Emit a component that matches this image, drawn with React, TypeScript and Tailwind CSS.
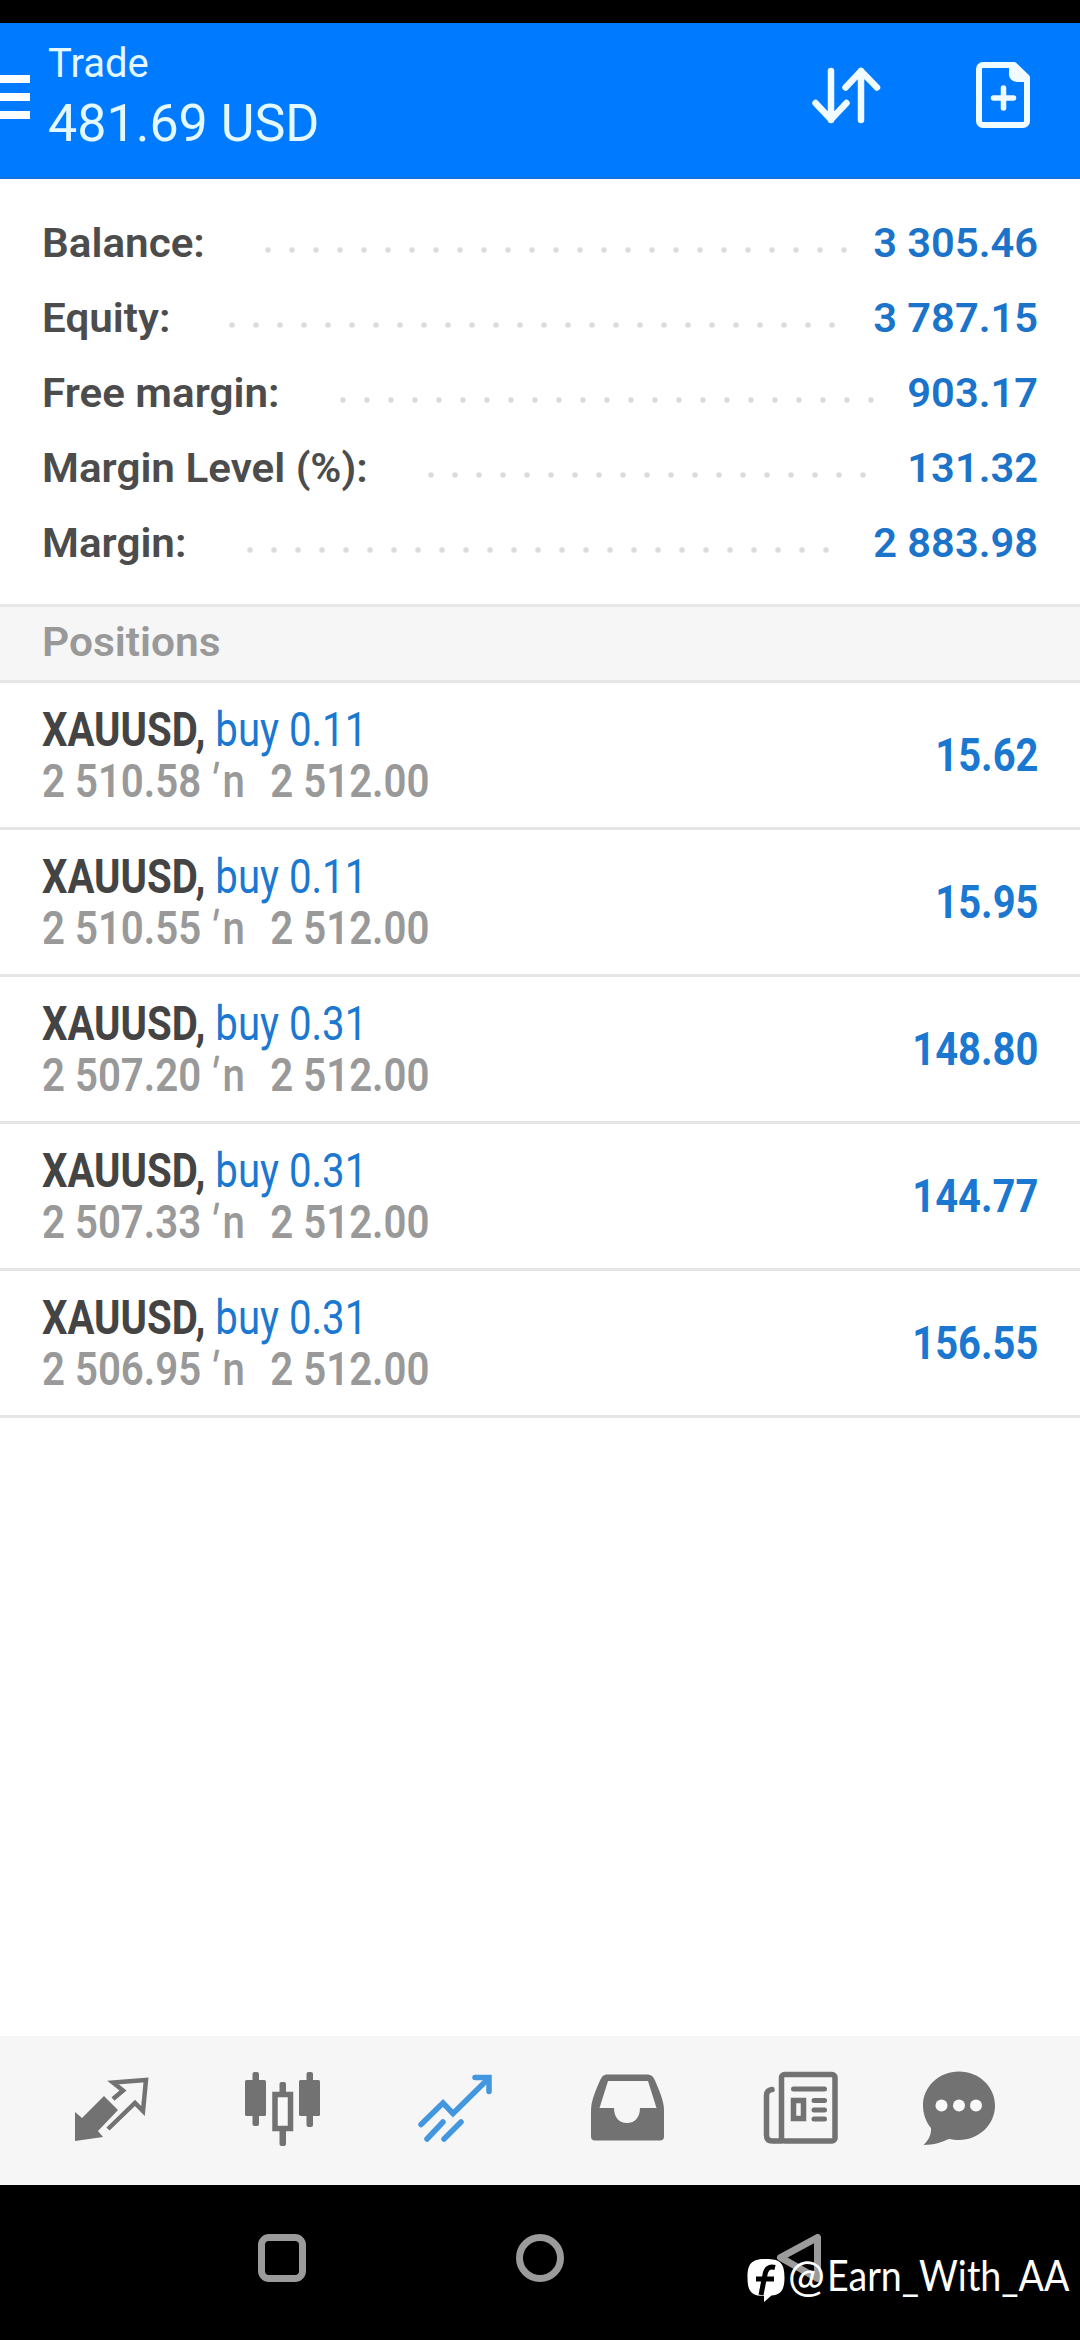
import React from 'react';

const summary = [
  { label: 'Balance:', value: '3 305.46', lead: 'w-[600px] mr-[17px]' },
  { label: 'Equity:', value: '3 787.15', lead: 'w-[624px] mr-[29px]' },
  { label: 'Free margin:', value: '903.17', lead: 'w-[552px] -mr-[10px]' },
  { label: 'Margin Level (%):', value: '131.32', lead: 'w-[456px] -mr-[2px]' },
  { label: 'Margin:', value: '2 883.98', lead: 'w-[600px] mr-[35px]' },
];

const positions = [
  { volume: '0.11', open: '2 510.58', profit: '15.62' },
  { volume: '0.11', open: '2 510.55', profit: '15.95' },
  { volume: '0.31', open: '2 507.20', profit: '148.80' },
  { volume: '0.31', open: '2 507.33', profit: '144.77' },
  { volume: '0.31', open: '2 506.95', profit: '156.55' },
];

function Header() {
  return (
    <header className="flex h-[156px] border-b-2 border-[#1273dc] bg-[#007bff] text-[#e4f8ff]">
      <div className="mt-[52px] flex h-[44px] w-[30px] flex-col justify-between">
        <span className="h-2 bg-white" />
        <span className="h-2 bg-white" />
        <span className="h-2 bg-white" />
      </div>
      <div className="ml-[18px] flex-1 pt-[13px]">
        <p className="text-[40px] leading-[56px]">Trade</p>
        <p className="text-[52px] leading-[64px]">481.69 USD</p>
      </div>
      <svg className="mt-[39px] mr-[93px] h-[64px] w-[70px]" viewBox="0 0 70 64" fill="none" stroke="#f0fcff" strokeWidth="6.5" strokeLinecap="round" strokeLinejoin="round">
        <path d="M19 9v49M3.5 41 19 57.5 34.5 41" />
        <path d="M49 58V9M33.5 25.5 49 9 65 25.5" />
      </svg>
      <svg className="mt-[36px] mr-[47px] h-[72px] w-[58px]" viewBox="0 0 58 72" fill="none" stroke="#f0fcff" strokeWidth="6" strokeLinejoin="round" strokeLinecap="round">
        <path d="M8 6h31l13 12.500V62a4 4 0 0 1-4 4H8a4 4 0 0 1-4-4V10a4 4 0 0 1 4-4Z" />
        <path d="M36 7v7a6 6 0 0 0 6 7h9Z" fill="#f0fcff" strokeWidth="4" />
        <path d="M28.5 29v20M18.5 39h20" strokeWidth="5.5" />
      </svg>
    </header>
  );
}

function SummaryRow({ label, value, lead }: { label: string; value: string; lead: string }) {
  return (
    <div className="flex h-[75px] items-center text-[40px] leading-[75px] font-semibold whitespace-pre">
      <span className="origin-left scale-x-[1.055] text-[#4c4c4c]">{label}</span>
      <span
        className={`mt-[13px] ml-auto h-1.5 shrink-0 bg-[radial-gradient(circle,#dadada_2px,transparent_3.5px)] bg-[length:24px_6px] ${lead}`}
      />
      <span className="w-[165px] shrink-0 origin-right scale-x-[1.04] text-right text-[#1b74c9]">{value}</span>
    </div>
  );
}

function PositionRow({ volume, open, profit }: { volume: string; open: string; profit: string }) {
  return (
    <div className="flex h-[147px] items-center justify-between border-b-[3px] border-[#e6e6e6] pr-[42px] pl-[42px] whitespace-pre">
      <div>
        <p className="origin-left scale-x-[0.836] text-[48px] leading-[51px]">
          <span className="font-bold text-[#444]">XAUUSD,</span>
          <span className="text-[#1b78d0]"> buy {volume}</span>
        </p>
        <p className="flex h-[51px] origin-left scale-x-[0.855] items-baseline text-[47px] leading-[51px] font-semibold text-[#999]">
          <span className="w-[197px]">{open}</span>
          <span className="w-[14px] -skew-x-12 font-medium">′</span>
          <span className="w-[56px] font-medium">n</span>
          <span>2 512.00</span>
        </p>
      </div>
      <span className="origin-right scale-x-[0.85] text-[47px] font-bold text-[#1b78d0]">{profit}</span>
    </div>
  );
}

function TabBar() {
  return (
    <nav className="flex h-[149px] bg-[#f6f6f6] pl-[25px] text-[#727272]">
      <svg className="h-[148px] w-[172px]" viewBox="0 0 172 148">
        <path d="M88 63l10-8.5-10-8 33-2.5-3 31-8-8-27 26" fill="none" stroke="currentColor" strokeWidth="4.5" />
        <path d="M50 76l7 6 22-22 14 14-20 21 5 6-28 4Z" fill="currentColor" />
      </svg>
      <svg className="h-[148px] w-[172px]" viewBox="0 0 172 148" fill="currentColor">
        <rect x="48" y="44" width="21" height="36" rx="1.5" />
        <rect x="55.5" y="36" width="6.5" height="54" rx="2" />
        <rect x="102" y="44" width="21" height="36" rx="1.5" />
        <rect x="109.5" y="36" width="6.5" height="55" rx="2" />
        <rect x="82.5" y="46" width="6.5" height="64" rx="2" />
        <rect x="78" y="58.5" width="15.5" height="34" fill="#f9f9f9" stroke="currentColor" strokeWidth="5.5" />
      </svg>
      <svg className="h-[148px] w-[172px]" viewBox="0 0 172 148" fill="none" stroke="#4397df" strokeWidth="5.5" strokeLinecap="round">
        <path d="M52 88.5 74 67l10 10.5L119 43" />
        <path d="M106 41.5h14v14" />
        <path d="M58 103 74 86M75 103 92 86" />
      </svg>
      <svg className="h-[148px] w-[172px]" viewBox="0 0 172 148" fill="currentColor">
        <path
          fillRule="evenodd"
          d="M67 38.5h38c5 0 7 1.5 9 6 6 14 9 22 9 30v26a4 4 0 0 1-4 4H54a4 4 0 0 1-4-4V75c0-9 3-17 9-30.5 2-4.5 4-6 8-6ZM67 45 58.5 72H73c0 9 5 15 13 15s13-6 13-15h16.5L107 45Z"
        />
      </svg>
      <svg className="h-[148px] w-[172px]" viewBox="0 0 172 148" fill="none" stroke="currentColor" strokeWidth="5.5" strokeLinecap="round">
        <rect x="68.5" y="38.5" width="53.5" height="66.5" rx="3" />
        <path d="M59 53.5c-4 .5-5.5 2.5-5.5 6V99c0 4 2 6 6 6h9" />
        <path d="M80.5 53h31M101 64.5h10.5M101 74h10.5M101 83h10.5" strokeWidth="5" />
        <rect x="80.5" y="64.5" width="10" height="18" strokeWidth="5.5" />
      </svg>
      <svg className="h-[148px] w-[172px]" viewBox="0 0 172 148" fill="currentColor">
        <path d="M74 35.5c20 0 36 15 36 34s-16 34.5-36 34.5c-4 0-7-.5-10-1-7 3-15 6-25.5 6 4-4 8-9 7.5-17C41 86 38 78 38 69.5c0-19 16-34 36-34Z" />
        <circle cx="56.5" cy="69.5" r="6" fill="#f9f9f9" />
        <circle cx="74" cy="69.5" r="6" fill="#f9f9f9" />
        <circle cx="91" cy="69.5" r="6" fill="#f9f9f9" />
      </svg>
    </nav>
  );
}

function SystemBar() {
  return (
    <div className="relative flex flex-1 bg-black pt-[49px]">
      <span className="ml-[258px] size-12 rounded-[11px] border-[7px] border-[#9b9b9b]" />
      <span className="ml-[210px] size-12 rounded-full border-[7px] border-[#9b9b9b]" />
      <svg className="ml-[210px] size-12" viewBox="0 0 48 48" fill="none" stroke="#9b9b9b" strokeWidth="7" strokeLinejoin="round">
        <path d="M43.5 3.5v41L6.5 23.5Z" />
      </svg>
      <div className="absolute top-[60px] left-[747px] flex text-white">
        <svg className="mt-[14px] h-[44px] w-[38px]" viewBox="0 0 38 44">
          <path d="M19 0c14 0 18.5 4 18.5 18.5 0 13-4 17.5-13 18L17 43v-6C4 37 .5 32 .5 18.5.5 4 5 0 19 0Z" fill="#fff" />
          <path d="M28 8.5c-6-1.5-9 1-10 7L14 36M9 20h18" fill="none" stroke="#000" strokeWidth="5" />
        </svg>
        <span className="ml-[3px] w-[39px] font-['Lato',sans-serif] text-[44px] leading-[60px]">@</span>
        <span className="w-[245px] origin-left scale-x-[0.895] font-['Lato',sans-serif] text-[42px] leading-[60px] whitespace-nowrap">
          Earn_With_AA
        </span>
      </div>
    </div>
  );
}

export default function App() {
  return (
    <div className="flex h-[2340px] w-[1080px] flex-col overflow-hidden bg-white font-['Roboto',sans-serif]">
      <div className="h-[23px] bg-black" />
      <Header />
      <section className="h-[425px] pt-[27px] pr-[42px] pl-[42px]">
        {summary.map((row) => (
          <SummaryRow key={row.label} {...row} />
        ))}
      </section>
      <h2 className="h-[79px] border-y-[3px] border-[#e6e6e6] bg-[#f6f6f6] pl-[42px] text-[41px] leading-[70px] font-semibold text-[#999]">
        <span className="inline-block origin-left scale-x-[1.035]">Positions</span>
      </h2>
      <section className="h-[1353px]">
        {positions.map((row) => (
          <PositionRow key={row.open} {...row} />
        ))}
      </section>
      <TabBar />
      <SystemBar />
    </div>
  );
}
